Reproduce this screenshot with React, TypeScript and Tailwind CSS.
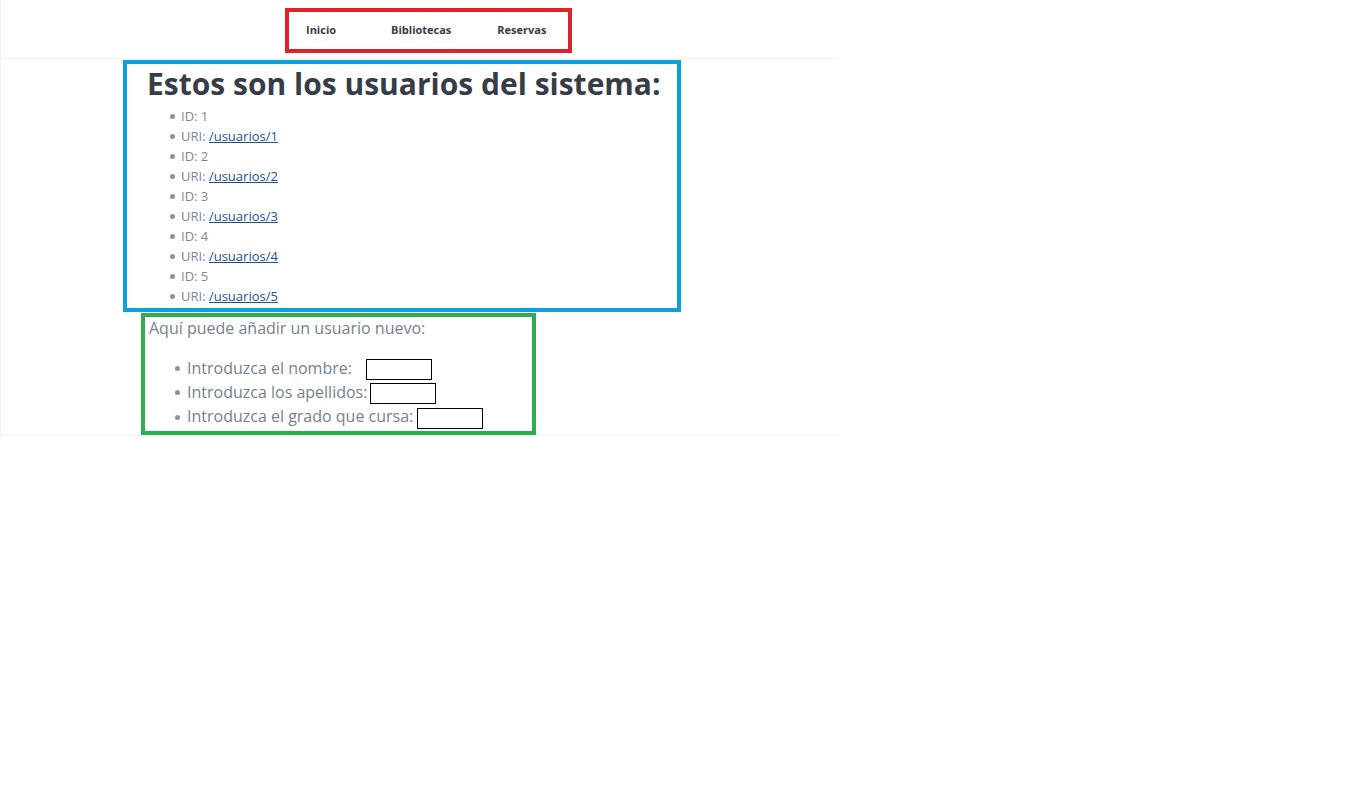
const usuarios = [1, 2, 3, 4, 5];

function Dot({ size }: { size: "sm" | "md" }) {
  return size === "sm" ? (
    <span className="inline-block w-[5px] h-[5px] rounded-full bg-[#8a93a0] mr-[6px] align-middle -mt-[2px]" />
  ) : (
    <span className="inline-block w-[5px] h-[5px] rounded-full bg-[#8a93a0] mr-[7px] align-middle -mt-[2px]" />
  );
}

export default function App() {
  return (
    <div className="min-h-screen bg-white font-['Open_Sans',sans-serif]">
      <div className="w-[838px] border-l border-b border-[#f1f1f1]">
        {/* Top nav */}
        <header className="h-[59px] border-b border-[#f1f1f1] pt-[8px] pl-[284px]">
          <nav className="flex items-center w-[287px] h-[45px] border-4 border-[#e2212b] pl-[17px] text-[11px] font-bold text-[#343b46]">
            <a>Inicio</a>
            <a className="ml-[55px]">Bibliotecas</a>
            <a className="ml-[46px]">Reservas</a>
          </nav>
        </header>

        {/* Lista de usuarios */}
        <section className="ml-[122px] mt-[1px] w-[558px] border-4 border-[#0aa1e0] pl-[20px] pb-[2px]">
          <h1 className="text-[30px] leading-[40px] font-bold text-[#373d48]">
            Estos son los usuarios del sistema:
          </h1>
          <ul className="mt-[2px] pl-[23px] text-[13px] leading-[20px] text-[#7c8695]">
            {usuarios.map((id) => (
              <>
                <li key={"id" + id}>
                  <Dot size="sm" />ID: {id}
                </li>
                <li key={"uri" + id}>
                  <Dot size="sm" />URI: <a href="#" className="text-[#1d4f9e] underline">/usuarios/{id}</a>
                </li>
              </>
            ))}
          </ul>
        </section>

        {/* Formulario */}
        <section className="ml-[140px] mt-[1px] w-[395px] border-4 border-[#2bb04b] pl-[4px] pb-[2px] text-[16px] text-[#76818f]">
          <p className="leading-[22px]">Aquí puede añadir un usuario nuevo:</p>
          <ul className="mt-[17px] pl-[26px] leading-[24px]">
            <li>
              <Dot size="md" />Introduzca el nombre:
              <input className="ml-[14px] align-middle w-[66px] h-[21px] border border-black" />
            </li>
            <li>
              <Dot size="md" />Introduzca los apellidos:
              <input className="ml-[3px] align-middle w-[66px] h-[21px] border border-black" />
            </li>
            <li>
              <Dot size="md" />Introduzca el grado que cursa:
              <input className="ml-[4px] align-middle w-[66px] h-[21px] border border-black" />
            </li>
          </ul>
        </section>
      </div>
    </div>
  );
}
